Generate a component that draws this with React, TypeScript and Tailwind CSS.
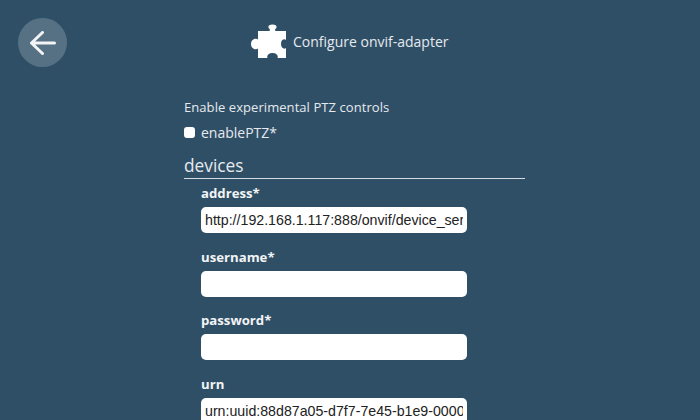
import { useState } from 'react';

const sans = 'font-["Open_Sans","Noto_Sans",sans-serif]';

function PuzzleIcon() {
  return (
    <svg width="36" height="36" viewBox="0 0 36 36" className="shrink-0">
      <path
        fill="#fff"
        d="M7 7 H18 C19 7 19.5 6 18.5 5 C16.5 3.5 17 0.5 21.5 0.5 C26 0.5 26.5 3.5 24.5 5 C23.5 6 24 7 25 7 H35 V16 C33.5 14.5 30 15.5 30 20 C30 24.5 33.5 25.5 35 24 V34 H26.5 C27.5 32 26 29 21.5 29 C17 29 15.5 32 16.5 34 H7 V24.5 C5.5 26 0 25.5 0 20 C0 14.5 5.5 14 7 15.5 Z"
      />
    </svg>
  );
}

function BackButton() {
  return (
    <button className="w-[49px] h-[49px] rounded-full bg-[#577184] flex items-center justify-center shrink-0">
      <svg width="28" height="24" viewBox="0 0 28 24" fill="none" stroke="#f2f4f6" strokeWidth="3" strokeLinecap="round" strokeLinejoin="round">
        <path d="M25.5 12 H2.5 M13.5 1.5 L2.5 12 L13.5 22.5" />
      </svg>
    </button>
  );
}

function Field({ label, value }: { label: string; value?: string }) {
  return (
    <div className="flex flex-col">
      <label className={`${sans} text-[13.2px] leading-[19px] font-bold text-[#f2f4f6] mb-[4px]`}>{label}</label>
      <input
        readOnly
        value={value ?? ''}
        className='w-[266px] h-[26px] rounded-[5px] bg-white px-[4px] text-[14.2px] text-[#222] font-["Liberation_Sans",sans-serif] outline-none'
      />
    </div>
  );
}

export default function App() {
  const [ptz, setPtz] = useState(false);

  return (
    <div className={`${sans} w-[700px] h-[420px] overflow-hidden bg-[#2f4f66] text-[#e6eaee]`}>
      <header className="flex items-start h-[86px] pt-[18px] pl-[18px]">
        <BackButton />
        <div className="flex items-center gap-[6px] ml-[184px] mt-[6px]">
          <PuzzleIcon />
          <span className="text-[14px] leading-[20px]">Configure onvif-adapter</span>
        </div>
      </header>

      <main className="ml-[184px] w-[341px] flex flex-col">
        <p className="text-[13px] leading-[18px] tracking-[0.065px] mt-[12px]">Enable experimental PTZ controls</p>
        <label className="flex items-center mt-[6px] h-[20px]">
          <input
            type="checkbox"
            checked={ptz}
            onChange={() => setPtz(!ptz)}
            className="appearance-none w-[11px] h-[11px] rounded-[3px] bg-white mr-[6px]"
          />
          <span className="text-[14px]">enablePTZ*</span>
        </label>

        <h2 className="text-[17.3px] leading-[24px] mt-[12px] border-b border-[#d5dbe0]">devices</h2>

        <div className="pl-[17px] flex flex-col gap-[14.5px] mt-[5px]">
          <Field label="address*" value="http://192.168.1.117:888/onvif/device_service" />
          <Field label="username*" />
          <Field label="password*" />
          <Field label="urn" value="urn:uuid:88d87a05-d7f7-7e45-b1e9-0000000000" />
        </div>
      </main>
    </div>
  );
}
